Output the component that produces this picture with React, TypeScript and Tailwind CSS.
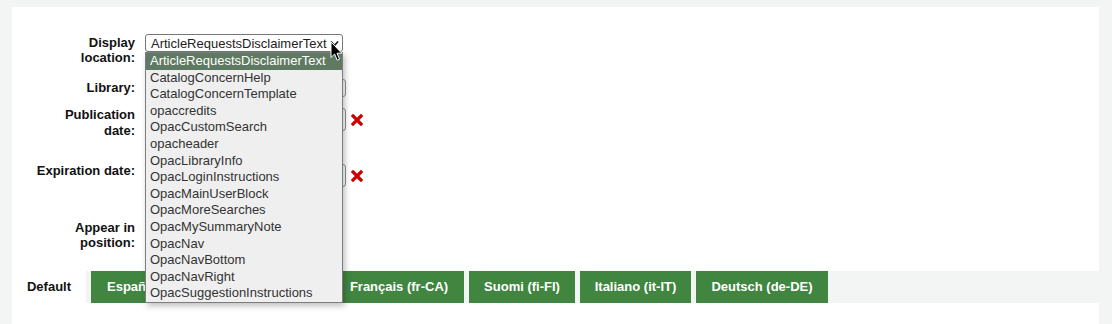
import React from 'react';

const options = [
  'ArticleRequestsDisclaimerText',
  'CatalogConcernHelp',
  'CatalogConcernTemplate',
  'opaccredits',
  'OpacCustomSearch',
  'opacheader',
  'OpacLibraryInfo',
  'OpacLoginInstructions',
  'OpacMainUserBlock',
  'OpacMoreSearches',
  'OpacMySummaryNote',
  'OpacNav',
  'OpacNavBottom',
  'OpacNavRight',
  'OpacSuggestionInstructions',
];

const tabs = [
  { label: 'Français (fr-CA)', w: 'w-[130px]' },
  { label: 'Suomi (fi-FI)', w: 'w-[106px]' },
  { label: 'Italiano (it-IT)', w: 'w-[111px]' },
  { label: 'Deutsch (de-DE)', w: 'w-[132px]' },
];

function RedX() {
  return (
    <svg width="12" height="12" viewBox="0 0 12 12" className="ml-[5px] shrink-0">
      <path d="M2 2 L10 10 M10 2 L2 10" stroke="#cc0000" strokeWidth="3.2" strokeLinecap="square" />
    </svg>
  );
}

function Label({ children, leading = 'leading-[15px]', extra = '' }: { children: React.ReactNode; leading?: string; extra?: string }) {
  return (
    <div className={`w-[123px] shrink-0 text-right font-bold text-[#111] ${leading} ${extra}`}>{children}</div>
  );
}

export default function App() {
  return (
    <div className="relative w-[1112px] h-[324px] overflow-hidden bg-[#f3f4f4] font-['Liberation_Sans',Arial,sans-serif] text-[13px]">
      <div className="pl-3 pr-[13px] pt-[7px]">
        {/* form panel */}
        <div className="bg-white h-[264px] pt-[27px]">
          <div className="flex gap-[10px] mb-[14px]">
            <Label extra="pt-px">
              Display
              <br />
              location:
            </Label>
            <div className="w-[198px] h-[18px] border border-[#767676] rounded-[3px] bg-white flex items-center pl-[5px] pr-[3px] text-[#222]">
              <span className="flex-1 truncate leading-none">ArticleRequestsDisclaimerText</span>
              <svg width="9" height="7" viewBox="0 0 9 7" className="shrink-0">
                <path d="M1 1.5 L4.5 5.5 L8 1.5" stroke="#222" strokeWidth="1.8" fill="none" />
              </svg>
            </div>
          </div>

          <div className="flex gap-[10px] mb-[11px]">
            <Label extra="pt-[1px]">Library:</Label>
            <div className="w-[201px] h-[18px] border border-[#8f8f8f] rounded-[3px] bg-white" />
          </div>

          <div className="flex gap-[10px] mb-[25px]">
            <Label leading="leading-[16px]" extra="-mt-px">
              Publication
              <br />
              date:
            </Label>
            <div className="flex items-center h-[23px]">
              <div className="w-[201px] h-[23px] border border-[#8f8f8f] rounded-[3px] bg-white" />
              <RedX />
            </div>
          </div>

          <div className="flex gap-[10px] mb-[33px]">
            <Label leading="leading-[16px]" extra="-mt-px">
              Expiration date:
            </Label>
            <div className="flex items-center h-[23px]">
              <div className="w-[201px] h-[23px] border border-[#8f8f8f] rounded-[3px] bg-white" />
              <RedX />
            </div>
          </div>

          <div className="flex gap-[10px]">
            <Label>
              Appear in
              <br />
              position:
            </Label>
          </div>
        </div>

        {/* language tabs */}
        <div className="flex h-8 gap-[5px]">
          <div className="bg-white w-[74px] flex items-center justify-center font-bold text-[#111]">Default</div>
          <div className="bg-[#408540] w-[129px] pl-[16px] flex items-center font-bold text-white whitespace-nowrap overflow-hidden">
            Español (es-ES)
          </div>
          <div className="bg-[#408540] w-[104px]" />
          {tabs.map((t) => (
            <div
              key={t.label}
              className={`bg-[#408540] ${t.w} flex items-center justify-center font-bold text-white whitespace-nowrap`}
            >
              {t.label}
            </div>
          ))}
        </div>

        <div className="bg-white h-[30px]" />
      </div>

      {/* open select list */}
      <div className="absolute left-[145px] top-[52px] w-[198px] h-[251px] border border-[#7d7d7d] bg-[#efefef] shadow-[2px_3px_6px_rgba(0,0,0,0.25)] overflow-hidden">
        {options.map((o, i) => (
          <div
            key={o}
            className={`h-[16.6px] leading-[16.6px] px-[4px] whitespace-nowrap ${i === 0 ? 'bg-[#5f7a62] text-white' : 'text-[#333]'}`}
          >
            {o}
          </div>
        ))}
      </div>

      {/* mouse pointer */}
      <svg width="13" height="21" viewBox="0 0 13 21" className="absolute left-[330px] top-[41px]">
        <path
          d="M1 1 L1 16.5 L4.6 13 L7.2 19.2 L9.6 18.2 L7 12.2 L11.8 12.2 Z"
          fill="#000"
          stroke="#fff"
          strokeWidth="1"
          strokeLinejoin="round"
        />
      </svg>
    </div>
  );
}
